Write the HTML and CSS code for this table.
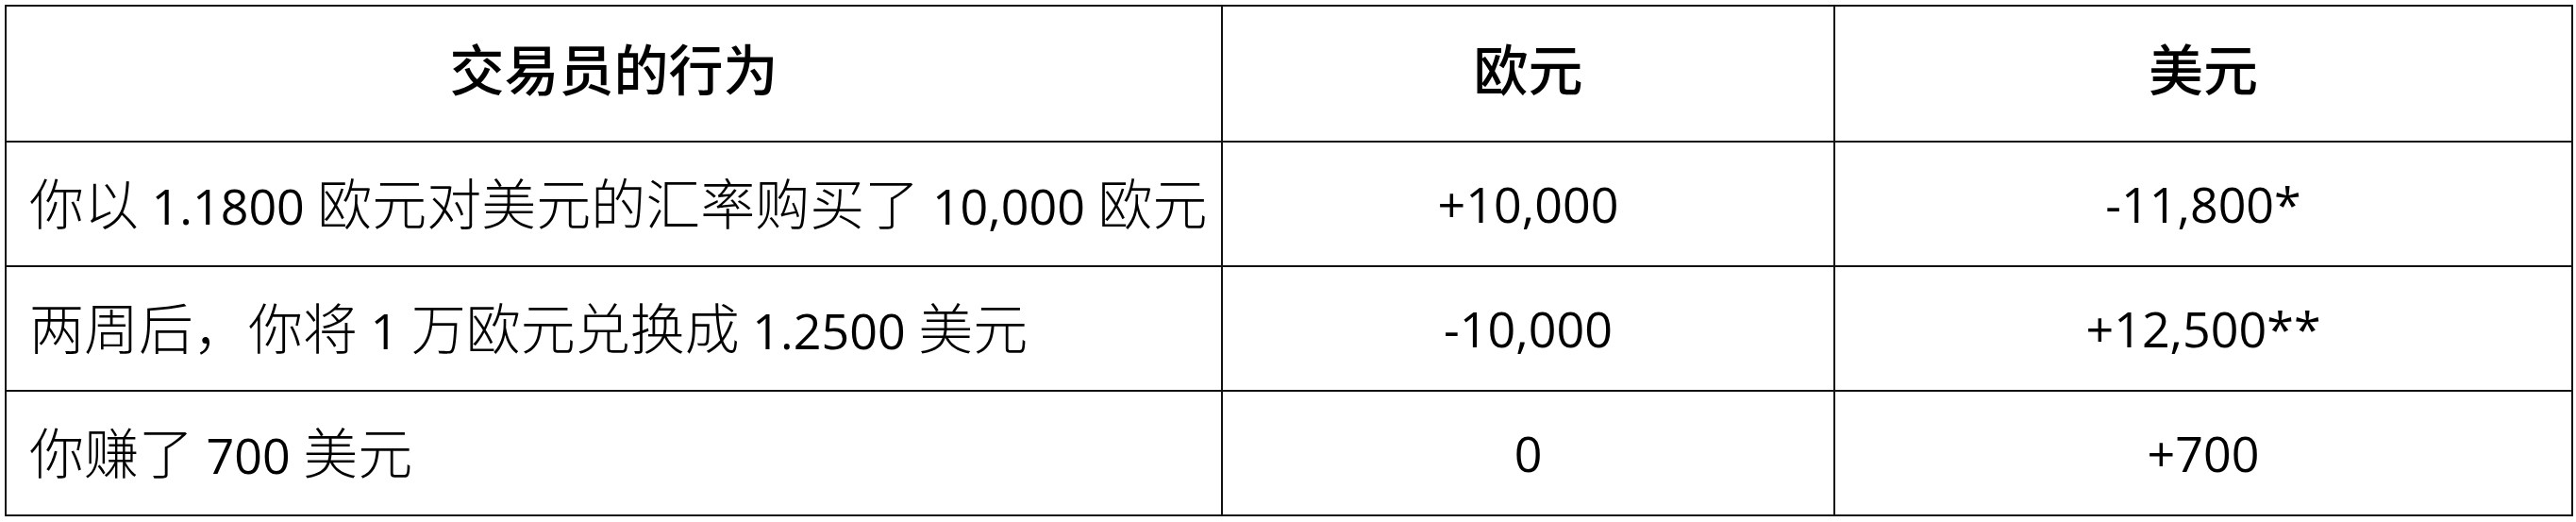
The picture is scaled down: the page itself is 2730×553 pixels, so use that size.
FILE: index.html
```html
<!DOCTYPE html>
<html lang="zh-CN">
<head>
<meta charset="utf-8">
<title>交易员的行为</title>
<link rel="stylesheet" href="styles.css">
</head>
<body>
<table class="fx-table">
  <colgroup>
    <col class="col-action">
    <col class="col-eur">
    <col class="col-usd">
  </colgroup>
  <thead>
    <tr class="head-row">
      <th>交易员的行为</th>
      <th>欧元</th>
      <th>美元</th>
    </tr>
  </thead>
  <tbody>
    <tr class="body-row">
      <td class="action">你以<span class="lat"> 1.1800 </span>欧元对美元的汇率购买了<span class="lat"> 10,000 </span>欧元</td>
      <td class="num">+10,000</td>
      <td class="num">-11,800*</td>
    </tr>
    <tr class="body-row">
      <td class="action">两周后，你将<span class="lat"> 1 </span>万欧元兑换成<span class="lat"> 1.2500 </span>美元</td>
      <td class="num">-10,000</td>
      <td class="num">+12,500**</td>
    </tr>
    <tr class="body-row">
      <td class="action">你赚了<span class="lat"> 700 </span>美元</td>
      <td class="num">0</td>
      <td class="num">+700</td>
    </tr>
  </tbody>
</table>
</body>
</html>
```

FILE: styles.css
```css
html, body {
  margin: 0;
  background: #ffffff;
}

body {
  padding: 5px 0 0 5px;
}

.fx-table {
  border-collapse: collapse;
  table-layout: fixed;
  width: 2720px;
  font-family: "Open Sans", "Noto Sans CJK SC", sans-serif;
  font-size: 58px;
  color: #000000;
}

.col-action { width: 1289px; }
.col-eur { width: 649px; }
.col-usd { width: 782px; }

.fx-table th,
.fx-table td {
  border: 2px solid #111111;
  padding: 0;
  white-space: nowrap;
  vertical-align: middle;
  line-height: 1.2;
}

.head-row { height: 144px; }
.head-row th {
  font-weight: 500;
  text-align: center;
  padding-bottom: 8px;
}

.body-row { height: 132px; }

.fx-table td.action {
  text-align: left;
  padding-left: 24px;
  font-weight: 300;
}

.lat {
  font-size: 52px;
  font-weight: 400;
}

.fx-table td.num {
  text-align: center;
  font-size: 52px;
  font-weight: 400;
}
```
